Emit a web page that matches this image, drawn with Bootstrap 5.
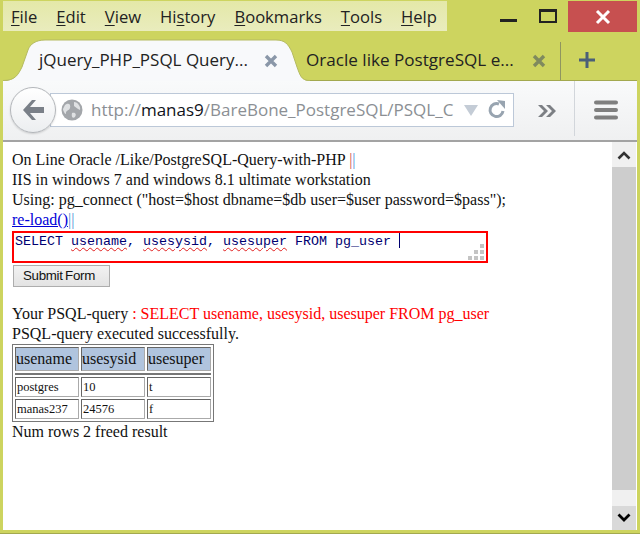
<!DOCTYPE html>
<html lang="en"><head><meta charset="utf-8"><title>Browser</title>
<link href="https://cdn.jsdelivr.net/npm/bootstrap@5.3.0/dist/css/bootstrap.min.css" rel="stylesheet">
<style>
html,body{height:534px;overflow:hidden;margin:0;background:#cdd45f}
.win{width:640px;height:534px;padding:1px 3px 3px 3px;background:#cdd45f;border-bottom:1px solid #a3a94f;font-family:"Open Sans","Noto Sans",sans-serif;color:#222}
.topbar{height:30px;flex:none}
.menus{width:444px;height:30px;padding:2px 0 0 8px;gap:19px;background:linear-gradient(#e4e8a8,#e9ecbd);font-size:16.6px;line-height:28px}
.menus u{text-underline-offset:2px}
.wctl{flex:1}
.wmin{width:17px;height:3px;background:#222;margin:18px 0 0 53px}
.wmax{width:18px;height:14px;border:2px solid #222;border-top-width:3px;margin:8px 0 0 22px}
.wclose{width:69px;height:31px;margin:0 0 0 11px;background:#c75050}
.tabrow{height:49px;flex:none}
.tabon{position:relative;z-index:1;width:307px;height:42px;margin-top:8px;font-size:17px;line-height:42px}
.tabon svg.shape{position:absolute;left:0;top:0}
.tabtxt{position:relative;padding-left:36px;width:261px;white-space:nowrap}
.tabx{position:relative;margin-top:15px;display:block}
.tabsec{width:254px;margin:8px 0 0 -4px;font-size:17.1px;line-height:42px;white-space:nowrap}
.tabsec-txt{width:226px}
.tabsep{width:1px;height:38px;margin-top:11px;background:#8f9560}
.tabplus{margin:20px 0 0 17px;display:block}
.tool{height:60px;flex:none;background:linear-gradient(#f9fafb,#eff0f1);border-top:1px solid #a3a94f;padding-left:7px}
.backbtn{position:relative;width:46px;height:46px;margin-top:6px;border-radius:50%;background:linear-gradient(#fff,#eceef0);border:1px solid #b3b6ba;box-shadow:0 1px 2px rgba(0,0,0,.15);z-index:1}
.urlbar{width:464px;height:34px;margin:12px 0 0 -6px;background:#fff;border:1px solid #bcc8d8;padding-left:10px}
.urltxt{font-size:17px;line-height:32px;color:#8b8f94;width:364px;margin-left:8px;white-space:nowrap}
.urltxt b{font-weight:400;color:#10131a}
.chev{margin:23px 0 0 23px}
.toolsep{width:1px;height:55px;margin:0 0 0 17px;background:#d2d6db}
.burger{margin:19px 0 0 19px}
.pagewrap{height:390px;flex:none;border-top:2px solid #a3a3a3;background:#fff}
.pagebody{width:609px;padding:8px 9px 0 9px;font-family:"Liberation Serif",serif;font-size:16px;line-height:20px;color:#111}
.sep1{color:#d0504a}.sep2{color:#4f8fd6}
.pagebody a{color:#0000d8}
.qbox{position:relative;width:476px;height:32px;margin-top:1px;border:2px solid #f00;padding:0 1px;font-family:"Liberation Mono",monospace;font-size:13.33px;line-height:14px;color:#000070;white-space:pre}
.sq{text-decoration:underline wavy #e02020 1px;text-underline-offset:2px}
.caret-bar{display:inline-block;width:1px;height:15px;background:#000070;vertical-align:-3px}
.grip{position:absolute;right:0;bottom:0}
.subbtn{display:block;width:97px;height:22px;margin:2px 0 0 1px;padding:0 5px 0 0;background:linear-gradient(#f2f2f2,#e3e3e3);border:1px solid #adadad;border-radius:0;font-family:"Liberation Sans",sans-serif;font-size:13.33px;letter-spacing:-.3px;word-spacing:-1px;line-height:20px;color:#111}
.gap17{height:17px}
.redt{color:#f00}
.res{border-collapse:separate;border-spacing:2px;border:1px solid #777;margin:0;width:202px;table-layout:fixed}
.res th{height:24px;background:#b0c4de;font-weight:400;padding:0;border:1px solid;border-color:#666 #aaa #aaa #666;font-size:16px;line-height:20px}
.res td{height:20px;padding:0 0 0 1px;border:1px solid;border-color:#666 #aaa #aaa #666;font-size:12.5px;line-height:16px}
.res td.rule{height:2px;padding:0;border:0;background:#777}
.sbar{width:24px;background:#f0f0f0}
.sbtn{height:25px}
.sthumb{height:323px;background:#cdcdcd}
.strack{height:16px}
.sdown{height:24px;background:#d9d9d9}
</style></head>
<body>
<div class="win d-flex flex-column">
  <div class="topbar d-flex">
    <div class="menus d-flex">
      <span><u>F</u>ile</span><span><u>E</u>dit</span><span><u>V</u>iew</span><span>Hi<u>s</u>tory</span><span><u>B</u>ookmarks</span><span><u>T</u>ools</span><span><u>H</u>elp</span>
    </div>
    <div class="wctl d-flex">
      <div class="wmin"></div><div class="wmax"></div>
      <div class="wclose d-flex align-items-center justify-content-center">
        <svg width="16" height="16" viewBox="0 0 16 16"><path d="M2 2 14 14M14 2 2 14" stroke="#fff" stroke-width="3"/></svg>
      </div>
    </div>
  </div>
  <div class="tabrow d-flex">
    <div class="tabon d-flex">
      <svg class="shape" width="307" height="42" viewBox="0 0 307 42"><path d="M0 42C12 42 15 36 19 28L25 11C27 5 33 1 42 1H273C282 1 285 5 289 13L294 28C297 36 298 42 307 42Z" fill="#f8f9fb"/><path d="M0 41.500C12 41.500 15 36 19 28L25 11C27 5 33 1 42 1H273C282 1 285 5 289 13L294 28C297 36 298 41.500 307 41.500" fill="none" stroke="#b5bb62"/></svg>
      <div class="tabtxt">jQuery_PHP_PSQL Query...</div>
      <svg class="tabx" width="14" height="14" viewBox="0 0 14 14"><path d="M2 2 12 12M12 2 2 12" stroke="#8a97a8" stroke-width="3.4"/></svg>
    </div>
    <div class="tabsec d-flex"><span class="tabsec-txt">Oracle like PostgreSQL e...</span>
      <svg class="tabx" width="14" height="14" viewBox="0 0 14 14"><path d="M2 2 12 12M12 2 2 12" stroke="#7f8a5e" stroke-width="3.4"/></svg>
    </div>
    <div class="tabsep"></div>
    <svg class="tabplus" width="18" height="18" viewBox="0 0 18 18"><path d="M9 1V17M1 9H17" stroke="#4a5f78" stroke-width="3"/></svg>
  </div>
  <div class="tool d-flex">
    <div class="backbtn d-flex align-items-center justify-content-center">
      <svg width="26" height="24" viewBox="0 0 26 24"><path d="M12 2 3 12 12 22H16L10 15H24V9H10L16 2Z" fill="#7a8088"/></svg>
    </div>
    <div class="urlbar d-flex align-items-center">
      <svg width="22" height="22" viewBox="0 0 22 22"><circle cx="11" cy="11" r="10.5" fill="#a3a6aa"/><path d="M4 6C8 3 10 6 9 9S5 11 5 14 2 12 2 10ZM13 3C17 3 20 8 19 11 16 10 15 8 13 7ZM11 14C14 13 16 15 14 18 12 20 10 18 11 14Z" fill="#dfe1e3"/></svg>
      <div class="urltxt">http://<b>manas9</b>/BareBone_PostgreSQL/PSQL_C</div>
      <svg class="ms-2" width="16" height="13" viewBox="0 0 16 13"><path d="M1 1H15L8 12Z" fill="#c4ccd6"/></svg>
      <svg class="ms-2" width="20" height="20" viewBox="0 0 20 20"><path d="M16 11A6.500 6.500 0 1 1 12 4" fill="none" stroke="#98a4b0" stroke-width="3"/><path d="M10 0 18 1V9Z" fill="#98a4b0"/></svg>
    </div>
    <svg class="chev" width="20" height="14" viewBox="0 0 20 14"><path d="M1 1H5L11 7 5 13H1L7 7ZM9 1H13L19 7 13 13H9L15 7Z" fill="#7c7f84"/></svg>
    <div class="toolsep"></div>
    <svg class="burger" width="24" height="20" viewBox="0 0 24 20"><path d="M2 2.500H22M2 10H22M2 17.500H22" stroke="#7f7f7f" stroke-width="4" stroke-linecap="round"/></svg>
  </div>
  <div class="pagewrap d-flex">
    <div class="pagebody">
      <div>On Line Oracle /Like/PostgreSQL-Query-with-PHP <span class="sep1">|</span><span class="sep2">|</span></div>
      <div>IIS in windows 7 and windows 8.1 ultimate workstation</div>
      <div>Using: pg_connect ("host=$host dbname=$db user=$user password=$pass");</div>
      <div><a href="#">re-load()</a><span class="sep2">||</span></div>
      <div class="qbox">SELECT <span class="sq">usename</span>, <span class="sq">usesysid</span>, <span class="sq">usesuper</span> FROM pg_user <span class="caret-bar"></span><svg class="grip" width="20" height="20" viewBox="0 0 20 20"><g fill="#c4c4c4"><rect x="14" y="3" width="4" height="4"/><rect x="8" y="9" width="4" height="4"/><rect x="14" y="9" width="4" height="4"/><rect x="2" y="15" width="4" height="4"/><rect x="8" y="15" width="4" height="4"/><rect x="14" y="15" width="4" height="4"/></g></svg></div>
      <button type="button" class="subbtn">Submit Form</button>
      <div class="gap17"></div>
      <div>Your PSQL-query <span class="redt">: SELECT usename, usesysid, usesuper FROM pg_user</span></div>
      <div>PSQL-query executed successfully.</div>
      <table class="res">
        <thead><tr><th>usename</th><th>usesysid</th><th>usesuper</th></tr></thead>
        <tbody>
          <tr><td class="rule" colspan="3"></td></tr>
          <tr><td>postgres</td><td>10</td><td>t</td></tr>
          <tr><td>manas237</td><td>24576</td><td>f</td></tr>
        </tbody>
      </table>
      <div>Num rows 2 freed result</div>
    </div>
    <div class="sbar d-flex flex-column">
      <div class="sbtn d-flex align-items-center justify-content-center"><svg width="14" height="10" viewBox="0 0 14 10"><path d="M1.500 8.500 7 3 12.500 8.500" fill="none" stroke="#333" stroke-width="2.600"/></svg></div>
      <div class="sthumb"></div>
      <div class="strack"></div>
      <div class="sdown d-flex align-items-center justify-content-center"><svg width="14" height="10" viewBox="0 0 14 10"><path d="M1.500 1.500 7 7 12.500 1.500" fill="none" stroke="#000" stroke-width="2.800"/></svg></div>
    </div>
  </div>
</div>
<script src="https://cdn.jsdelivr.net/npm/bootstrap@5.3.0/dist/js/bootstrap.bundle.min.js"></script>
</body></html>
